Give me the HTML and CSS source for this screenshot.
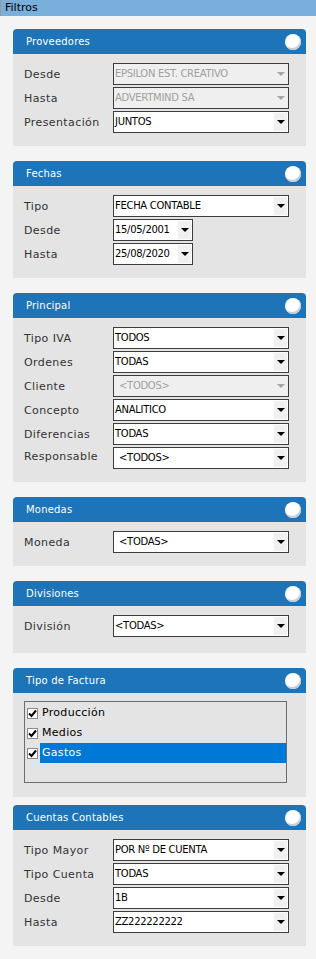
FILE: index.html
```html
<!DOCTYPE html>
<html lang="es">
<head>
    <meta charset="UTF-8">
    <meta name="viewport" content="width=device-width, initial-scale=1.0">
    <title>Filtros</title>
    <link rel="stylesheet" href="styles.css">
</head>
<body>
    <div class="titlebar">Filtros</div>

    <div class="filters">
        <!-- Proveedores -->
        <section class="panel">
            <div class="panel-head"><span>Proveedores</span><span class="toggle"></span></div>
            <div class="panel-body">
                <div class="row">
                    <label>Desde</label>
                    <div class="combo disabled"><span class="combo-value">EPSILON EST. CREATIVO</span><span class="combo-arrow"></span></div>
                </div>
                <div class="row">
                    <label>Hasta</label>
                    <div class="combo disabled"><span class="combo-value">ADVERTMIND SA</span><span class="combo-arrow"></span></div>
                </div>
                <div class="row">
                    <label>Presentación</label>
                    <div class="combo"><span class="combo-value">JUNTOS</span><span class="combo-arrow"></span></div>
                </div>
            </div>
        </section>

        <!-- Fechas -->
        <section class="panel">
            <div class="panel-head"><span>Fechas</span><span class="toggle"></span></div>
            <div class="panel-body">
                <div class="row">
                    <label>Tipo</label>
                    <div class="combo"><span class="combo-value">FECHA CONTABLE</span><span class="combo-arrow"></span></div>
                </div>
                <div class="row">
                    <label>Desde</label>
                    <div class="combo date"><span class="combo-value">15/05/2001</span><span class="combo-arrow"></span></div>
                </div>
                <div class="row">
                    <label>Hasta</label>
                    <div class="combo date"><span class="combo-value">25/08/2020</span><span class="combo-arrow"></span></div>
                </div>
            </div>
        </section>

        <!-- Principal -->
        <section class="panel">
            <div class="panel-head"><span>Principal</span><span class="toggle"></span></div>
            <div class="panel-body">
                <div class="row">
                    <label>Tipo IVA</label>
                    <div class="combo"><span class="combo-value">TODOS</span><span class="combo-arrow"></span></div>
                </div>
                <div class="row">
                    <label>Ordenes</label>
                    <div class="combo"><span class="combo-value">TODAS</span><span class="combo-arrow"></span></div>
                </div>
                <div class="row">
                    <label>Cliente</label>
                    <div class="combo disabled"><span class="combo-value indent">&lt;TODOS&gt;</span><span class="combo-arrow"></span></div>
                </div>
                <div class="row">
                    <label>Concepto</label>
                    <div class="combo"><span class="combo-value">ANALITICO</span><span class="combo-arrow"></span></div>
                </div>
                <div class="row">
                    <label>Diferencias</label>
                    <div class="combo"><span class="combo-value">TODAS</span><span class="combo-arrow"></span></div>
                </div>
                <div class="row">
                    <label class="raised">Responsable</label>
                    <div class="combo"><span class="combo-value indent">&lt;TODOS&gt;</span><span class="combo-arrow"></span></div>
                </div>
            </div>
        </section>

        <!-- Monedas -->
        <section class="panel">
            <div class="panel-head"><span>Monedas</span><span class="toggle"></span></div>
            <div class="panel-body">
                <div class="row">
                    <label>Moneda</label>
                    <div class="combo"><span class="combo-value indent">&lt;TODAS&gt;</span><span class="combo-arrow"></span></div>
                </div>
            </div>
        </section>

        <!-- Divisiones -->
        <section class="panel panel-close">
            <div class="panel-head"><span>Divisiones</span><span class="toggle"></span></div>
            <div class="panel-body tall">
                <div class="row">
                    <label>División</label>
                    <div class="combo"><span class="combo-value">&lt;TODAS&gt;</span><span class="combo-arrow"></span></div>
                </div>
            </div>
        </section>

        <!-- Tipo de Factura -->
        <section class="panel panel-tight">
            <div class="panel-head"><span>Tipo de Factura</span><span class="toggle"></span></div>
            <div class="panel-body list-body">
                <div class="listbox">
                    <div class="list-item"><span class="check"><svg width="9" height="9" viewBox="0 0 9 9"><path d="M1 4.5 L3.5 7 L8 1.5" fill="none" stroke="#000" stroke-width="2"/></svg></span><span class="item-text">Producción</span></div>
                    <div class="list-item"><span class="check"><svg width="9" height="9" viewBox="0 0 9 9"><path d="M1 4.5 L3.5 7 L8 1.5" fill="none" stroke="#000" stroke-width="2"/></svg></span><span class="item-text">Medios</span></div>
                    <div class="list-item selected"><span class="check"><svg width="9" height="9" viewBox="0 0 9 9"><path d="M1 4.5 L3.5 7 L8 1.5" fill="none" stroke="#000" stroke-width="2"/></svg></span><span class="item-text">Gastos</span></div>
                </div>
            </div>
        </section>

        <!-- Cuentas Contables -->
        <section class="panel">
            <div class="panel-head"><span>Cuentas Contables</span><span class="toggle"></span></div>
            <div class="panel-body">
                <div class="row">
                    <label>Tipo Mayor</label>
                    <div class="combo"><span class="combo-value">POR Nº DE CUENTA</span><span class="combo-arrow"></span></div>
                </div>
                <div class="row">
                    <label>Tipo Cuenta</label>
                    <div class="combo"><span class="combo-value">TODAS</span><span class="combo-arrow"></span></div>
                </div>
                <div class="row">
                    <label>Desde</label>
                    <div class="combo"><span class="combo-value">1B</span><span class="combo-arrow"></span></div>
                </div>
                <div class="row">
                    <label>Hasta</label>
                    <div class="combo"><span class="combo-value">ZZ222222222</span><span class="combo-arrow"></span></div>
                </div>
            </div>
        </section>
    </div>
</body>
</html>
```

FILE: styles.css
```css
body {
    margin: 0;
    background-color: #f4f4f4;
    font-family: "DejaVu Sans", Verdana, sans-serif;
    color: #333;
}

.titlebar {
    height: 16px;
    line-height: 16px;
    padding-left: 4px;
    border-left: 1px solid #9a9a9a;
    background-color: #7aaedb;
    color: #000;
    font-size: 11px;
}

.filters {
    padding: 13px 10px 12px 13px;
}

.panel {
    margin-bottom: 15px;
}

.panel-tight {
    margin-bottom: 8px;
}

.panel-head {
    height: 25px;
    display: flex;
    align-items: center;
    justify-content: space-between;
    padding: 0 5px 0 13px;
    border-radius: 4px 4px 0 0;
    background-color: #1e74b8;
    color: white;
    font-size: 10px;
    letter-spacing: 0.2px;
}

.toggle {
    width: 16px;
    height: 16px;
    border-radius: 50%;
    background-color: white;
    box-shadow: inset -1px -2px 1px #c2cad4;
}

.panel-body {
    background-color: #e4e4e4;
    padding: 9px 17px 13px 11px;
    display: flex;
    flex-direction: column;
    gap: 2px;
}

.panel-body.tall {
    padding-bottom: 16px;
}

.panel-body.list-body {
    padding: 8px 19px 14px 11px;
}

.row {
    display: flex;
    align-items: center;
    height: 22px;
}

.row label {
    width: 89px;
    font-size: 11px;
    letter-spacing: 0.4px;
    color: #333;
}

.row label.raised {
    margin-top: -4px;
}

.combo {
    width: 176px;
    height: 22px;
    box-sizing: border-box;
    display: flex;
    border: 1px solid #3d3d3d;
    background-color: white;
}

.combo.date {
    width: 80px;
}

.combo-value {
    flex-grow: 1;
    line-height: 20px;
    padding-left: 1px;
    font-size: 10px;
    letter-spacing: -0.3px;
    color: #000;
    white-space: nowrap;
    overflow: hidden;
}

.combo-value.indent {
    padding-left: 5px;
}

.combo-arrow {
    width: 13px;
    margin: 1px;
    background-color: #f0f0f0;
    display: flex;
    align-items: center;
    justify-content: center;
}

.combo-arrow::after {
    content: "";
    border-left: 4px solid transparent;
    border-right: 4px solid transparent;
    border-top: 4px solid #000;
}

.combo.disabled {
    background-color: #efefef;
}

.combo.disabled .combo-value {
    color: #a0a0a0;
}

.combo.disabled .combo-arrow {
    background-color: transparent;
}

.combo.disabled .combo-arrow::after {
    border-top-color: #a4a4a4;
}

.listbox {
    height: 82px;
    box-sizing: border-box;
    border: 1px solid #6d6d6d;
    padding-top: 1px;
}

.list-item {
    display: flex;
    align-items: center;
    height: 20px;
    padding-left: 2px;
    font-size: 11px;
    color: #000;
}

.check {
    width: 11px;
    height: 11px;
    box-sizing: border-box;
    border: 1px solid #8a8a8a;
    background-color: white;
    display: flex;
    align-items: center;
    justify-content: center;
}

.item-text {
    flex-grow: 1;
    height: 20px;
    line-height: 20px;
    margin-left: 2px;
    padding-left: 2px;
    letter-spacing: 0.3px;
}

.list-item.selected .item-text {
    background-color: #0078d7;
    color: white;
}
```
